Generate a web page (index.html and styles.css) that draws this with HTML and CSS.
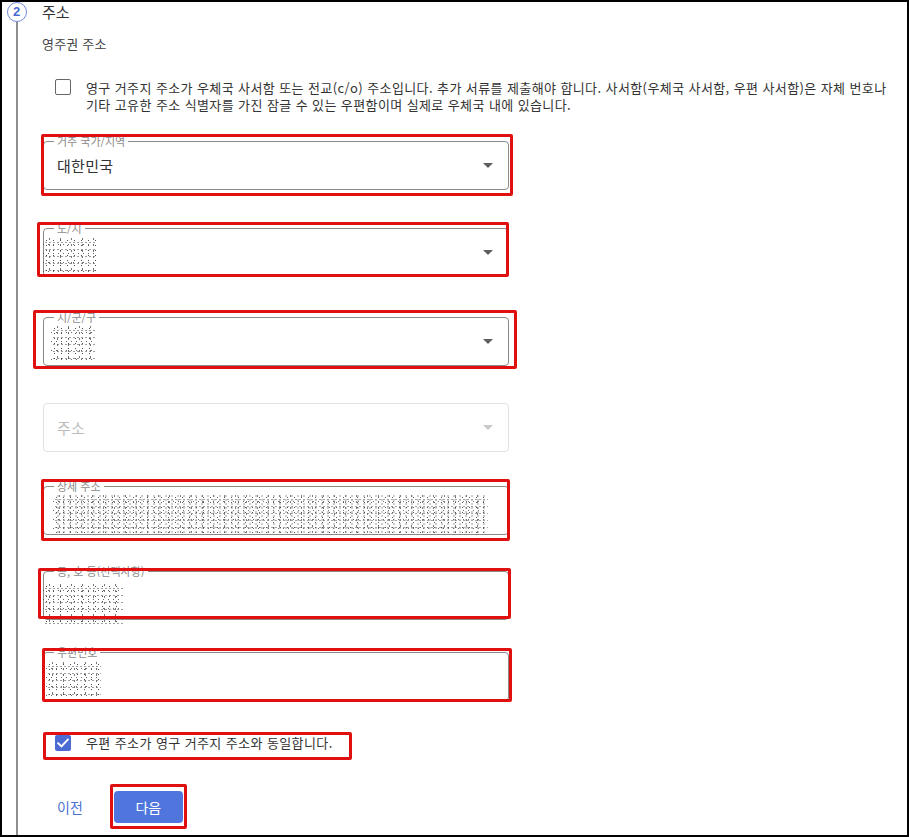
FILE: index.html
```html
<!DOCTYPE html>
<html lang="ko">
<head>
<meta charset="utf-8">
<title>주소</title>
<link rel="stylesheet" href="styles.css">
</head>
<body>
<div class="frame">
  <div class="rail">
    <div class="step-num">2</div>
    <div class="rail-line"></div>
  </div>
  <div class="content">
    <h2 class="title">주소</h2>
    <div class="subtitle">영주권 주소</div>

    <div class="check-row po">
      <span class="box"></span>
      <div class="check-text">
        <span class="line">영구 거주지 주소가 우체국 사서함 또는 전교(c/o) 주소입니다. 추가 서류를 제출해야 합니다. 사서함(우체국 사서함, 우편 사서함)은 자체 번호나</span>
        <span class="line">기타 고유한 주소 식별자를 가진 잠글 수 있는 우편함이며 실제로 우체국 내에 있습니다.</span>
      </div>
    </div>

    <div class="field select f1">
      <span class="flabel">거주 국가/지역</span>
      <span class="value">대한민국</span>
      <span class="arrow"></span>
      <span class="mark m1"></span>
    </div>

    <div class="field select f2">
      <span class="flabel">도/시</span>
      <span class="noise n2"></span>
      <span class="arrow"></span>
      <span class="mark m2"></span>
    </div>

    <div class="field select f3">
      <span class="flabel">시/군/구</span>
      <span class="noise n3"></span>
      <span class="arrow"></span>
      <span class="mark m3"></span>
    </div>

    <div class="field select disabled f4">
      <span class="value placeholder">주소</span>
      <span class="arrow"></span>
    </div>

    <div class="field f5">
      <span class="flabel">상세 주소</span>
      <span class="noise dense n5"></span>
      <span class="mark m5"></span>
    </div>

    <div class="field f6">
      <span class="flabel">동, 호 등(선택사항)</span>
      <span class="noise n6"></span>
      <span class="mark m6"></span>
    </div>

    <div class="field f7">
      <span class="flabel">우편번호</span>
      <span class="noise n7"></span>
      <span class="mark m7"></span>
    </div>

    <div class="check-row same">
      <span class="box checked">
        <svg viewBox="0 0 16 16" width="16" height="16"><path d="M3.2 8.3 L6.5 11.4 L12.8 4.6" fill="none" stroke="#fff" stroke-width="1.9" stroke-linecap="square"/></svg>
      </span>
      <div class="check-text single">우편 주소가 영구 거주지 주소와 동일합니다.</div>
      <span class="mark mcb"></span>
    </div>

    <div class="actions">
      <button class="btn-text" type="button">이전</button>
      <button class="btn-primary" type="button">다음<span class="mark mbtn"></span></button>
    </div>
  </div>
</div>
</body>
</html>
```

FILE: styles.css
```css
* { box-sizing: border-box; }

html, body {
  margin: 0;
  padding: 0;
  background: #fff;
}

body {
  font-family: "Noto Sans CJK KR", "Noto Sans", sans-serif;
  color: #333;
}

.frame {
  width: 909px;
  height: 837px;
  border: 2px solid #000;
  display: flex;
  overflow: hidden;
  background: #fff;
}

/* stepper rail */
.rail {
  width: 29px;
  flex: none;
  display: flex;
  flex-direction: column;
  align-items: center;
}

.step-num {
  width: 20px;
  height: 20px;
  border: 1.5px solid #6f8ad9;
  border-radius: 50%;
  color: #4a6bd2;
  font-family: "Liberation Sans", Arial, sans-serif;
  font-weight: bold;
  font-size: 13px;
  line-height: 17px;
  text-align: center;
  flex: none;
}

.rail-line {
  width: 2px;
  flex: 1;
  background: #8e8e8e;
}

.content {
  margin-left: 11px;
  flex: 1;
  display: flex;
  flex-direction: column;
  align-items: flex-start;
}

.title {
  margin: 0;
  font-size: 15px;
  font-weight: normal;
  line-height: 20px;
  color: #333;
}

.subtitle {
  margin-top: 13px;
  font-size: 13px;
  line-height: 18px;
  color: #444;
  letter-spacing: 0.2px;
}

/* checkboxes */
.check-row {
  position: relative;
  display: flex;
  align-items: flex-start;
  padding-left: 13px;
}

.check-row.po { margin-top: 26px; }

.box {
  width: 16px;
  height: 16px;
  border: 1.5px solid #666;
  border-radius: 2px;
  flex: none;
  background: #fff;
}

.box.checked {
  border: none;
  background: #4a6bd2;
  border-radius: 2px;
}

.box.checked svg { display: block; }

.check-text {
  margin-left: 15px;
  font-size: 13px;
  line-height: 17px;
  letter-spacing: 0.4px;
  color: #333;
  display: flex;
  flex-direction: column;
}

.check-text .line {
  white-space: nowrap;
  height: 17px;
}

.check-text.single {
  line-height: 16px;
  white-space: nowrap;
}

.check-row.same { margin-top: 34px; }

/* fields */
.field {
  position: relative;
  margin-left: 1px;
  width: 466px;
  height: 49px;
  border: 1px solid #8a8a8a;
  border-radius: 4px;
  display: flex;
  align-items: center;
  padding: 0 15px 0 13px;
}

.f1 { margin-top: 28px; }
.f2 { margin-top: 38px; }
.f3 { margin-top: 40px; }
.f4 { margin-top: 37px; }
.f5 { margin-top: 34px; }
.f6 { margin-top: 36px; }
.f7 { margin-top: 32px; }

.flabel {
  position: absolute;
  top: -8px;
  left: 10px;
  padding: 0 3px;
  background: #fff;
  font-size: 11px;
  line-height: 14px;
  color: #8a8a8a;
  white-space: nowrap;
}

.value {
  font-size: 15px;
  line-height: 20px;
  color: #333;
  flex: 1;
  letter-spacing: 0.3px;
}

.arrow {
  width: 0;
  height: 0;
  border-left: 5px solid transparent;
  border-right: 5px solid transparent;
  border-top: 5px solid #5e5e5e;
  margin-left: auto;
}

.field.disabled { border-color: #e2e2e2; }
.field.disabled .placeholder { color: #bdbdbd; }
.field.disabled .arrow { border-top-color: #c9c9c9; }

/* blurred (pixelated) personal data */
.noise {
  display: block;
  flex: none;
  opacity: 0.8;
  background:
    radial-gradient(circle, #222 0 0.5px, transparent 0.9px) 0 0 / 7px 5px,
    radial-gradient(circle, #444 0 0.5px, transparent 0.9px) 3px 2px / 5px 9px,
    radial-gradient(circle, #555 0 0.5px, transparent 0.9px) 1px 4px / 11px 6px,
    radial-gradient(circle, #888 0 0.6px, transparent 1px) 5px 1px / 4px 7px;
}

.noise.dense {
  opacity: 0.75;
  background:
    radial-gradient(circle, #222 0 0.5px, transparent 0.9px) 0 0 / 7px 5px,
    radial-gradient(circle, #444 0 0.5px, transparent 0.9px) 3px 2px / 5px 9px,
    radial-gradient(circle, #555 0 0.5px, transparent 0.9px) 1px 4px / 11px 6px,
    radial-gradient(circle, #888 0 0.6px, transparent 1px) 5px 1px / 4px 7px,
    radial-gradient(circle, #777 0 0.5px, transparent 0.9px) 2px 3px / 6px 4px;
}

.n2 { width: 54px; height: 34px; margin-left: -14px; margin-top: 5px; }
.n3 { width: 45px; height: 35px; margin-left: -6px; margin-top: 4px; }
.n5 { width: 435px; height: 40px; margin-left: -4px; margin-top: 9px; }
.n6 { width: 80px; height: 42px; margin-left: -14px; margin-top: 18px; }
.n7 { width: 55px; height: 35px; margin-left: -11px; margin-top: 6px; }

/* red annotation boxes drawn over the form */
.mark {
  position: absolute;
  border: 3px solid #e01010;
  border-radius: 2px;
  pointer-events: none;
}

.m1 { left: -3px; top: -8px; width: 472px; height: 62px; }
.m2 { left: -7px; top: -7px; width: 472px; height: 55px; }
.m3 { left: -11px; top: -8px; width: 484px; height: 59px; }
.m5 { left: -3px; top: -8px; width: 469px; height: 62px; }
.m6 { left: -6px; top: -4px; width: 473px; height: 51px; }
.m7 { left: -2px; top: -5px; width: 470px; height: 54px; }
.mcb { left: 1px; top: -3px; width: 309px; height: 28px; }
.mbtn { left: -4px; top: -7px; width: 77px; height: 45px; }

/* actions */
.actions {
  margin-top: 40px;
  display: flex;
  align-items: center;
  gap: 16px;
}

.btn-text,
.btn-primary {
  font-family: "Noto Sans CJK KR", "Noto Sans", sans-serif;
  font-size: 14px;
  height: 32px;
  line-height: 32px;
  border: none;
  border-radius: 4px;
  cursor: pointer;
}

.btn-text {
  background: transparent;
  color: #4d6fd3;
  padding: 0 15px;
}

.btn-primary {
  position: relative;
  background: #5076de;
  color: #fff;
  width: 69px;
  padding: 0;
}
```
